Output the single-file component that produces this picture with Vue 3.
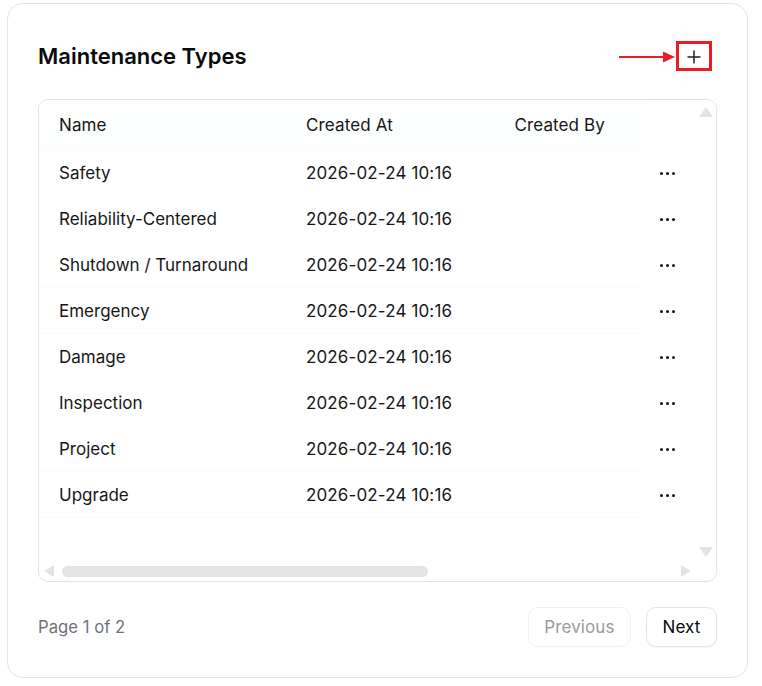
<script setup>
const rows = ['Safety', 'Reliability-Centered', 'Shutdown / Turnaround', 'Emergency', 'Damage', 'Inspection', 'Project', 'Upgrade']
</script>

<template>
  <div class="page">
    <section class="card">
      <header class="head">
        <h1>Maintenance Types</h1>
        <button class="add" aria-label="Add">
          <svg width="14" height="14" viewBox="0 0 14 14"><path d="M7 0.5V13.5M0.5 7H13.5" stroke="#222" stroke-width="1.5" fill="none" /></svg>
        </button>
        <svg class="arrow" width="58" height="14" viewBox="0 0 58 14"><path d="M0 7H46" stroke="#ed1c24" stroke-width="2" /><path d="M44 1.5L56 7L44 12.5Z" fill="#ed1c24" /></svg>
        <span class="redbox"></span>
      </header>

      <div class="tablebox">
        <div class="row th">
          <span>Name</span><span>Created At</span><span>Created By</span><span></span>
        </div>
        <div v-for="r in rows" :key="r" class="row">
          <span>{{ r }}</span>
          <span>2026-02-24 10:16</span>
          <span></span>
          <span class="dots"><i></i><i></i><i></i></span>
        </div>
        <span class="sb up"></span>
        <span class="sb down"></span>
        <span class="sb left"></span>
        <span class="sb right"></span>
        <span class="thumb"></span>
      </div>

      <footer class="foot">
        <span class="pg">Page 1 of 2</span>
        <div class="btns">
          <button class="btn off">Previous</button>
          <button class="btn">Next</button>
        </div>
      </footer>
    </section>
  </div>
</template>

<style>
html, body { margin: 0; background: #fff; }
</style>

<style scoped>
.page { width: 762px; height: 686px; padding: 3px 14px 0 7px; box-sizing: border-box; font-family: Inter, "Liberation Sans", sans-serif; color: #111; }
.card { width: 741px; height: 675px; box-sizing: border-box; border: 1px solid #e4e4e7; border-radius: 16px; padding: 0 30px; background: #fff; }
.head { position: relative; height: 95px; display: flex; align-items: center; justify-content: space-between; }
h1 { margin: 0; font-size: 22px; font-weight: 600; letter-spacing: 0; color: #0a0a0a; position: relative; top: 4px; }
.add { width: 34px; height: 30px; background: none; border: 0; padding: 0; margin-right: 6px; display: flex; align-items: center; justify-content: center; position: relative; top: 5px; }
.redbox { position: absolute; left: 638px; top: 37px; width: 36px; height: 30px; box-sizing: border-box; border: 3px solid #ed1c24; }
.arrow { position: absolute; left: 581px; top: 46px; }
.tablebox { position: relative; height: 483px; box-sizing: border-box; border: 1px solid #e4e4e7; border-radius: 10px; overflow: hidden; }
.row { display: grid; grid-template-columns: 247px 208.5px 1fr 69px; height: 46px; box-sizing: border-box; align-items: center; padding-left: 20px; font-size: 17px; font-weight: 400; letter-spacing: 0; color: #171717; box-shadow: inset -69px 0 0 #fff, inset 0 -1px 0 #fbfbfb; }
.row span:nth-child(2):not(:empty) { letter-spacing: 0.13px; }
.row.th { height: 50px; letter-spacing: 0.1px; background: #fdfefe; }
.dots { display: flex; gap: 3px; justify-self: start; margin: 1px 0 0 13px; }
.dots i { width: 3px; height: 3px; border-radius: 50%; background: #111; }
.sb { position: absolute; width: 0; height: 0; border-style: solid; border-color: transparent; }
.up { right: 3px; top: 7px; border-width: 0 7px 10px; border-bottom-color: #e4e4e7; }
.down { right: 3px; top: 447px; border-width: 10px 7px 0; border-top-color: #e4e4e7; }
.left { left: 5px; top: 465px; border-width: 6.5px 10px 6.5px 0; border-right-color: #e4e4e7; }
.right { left: 642px; top: 465px; border-width: 6.5px 0 6.5px 10px; border-left-color: #e4e4e7; }
.thumb { position: absolute; left: 23px; top: 466px; width: 366px; height: 11px; border-radius: 6px; background: #e4e4e7; }
.foot { display: flex; justify-content: space-between; align-items: center; margin-top: 25px; }
.pg { font-size: 16.7px; color: #71717a; }
.btns { display: flex; gap: 15px; }
.btn { height: 40px; padding: 0 15.5px; font: 400 17px Inter, "Liberation Sans", sans-serif; letter-spacing: 0.1px; color: #0a0a0a; background: #fff; border: 1px solid #e4e4e7; border-radius: 10px; box-shadow: 0 1px 2px rgba(0,0,0,.05); }
.btn.off { color: #9a9a9a; border-color: #f0f0f2; box-shadow: none; }
</style>
